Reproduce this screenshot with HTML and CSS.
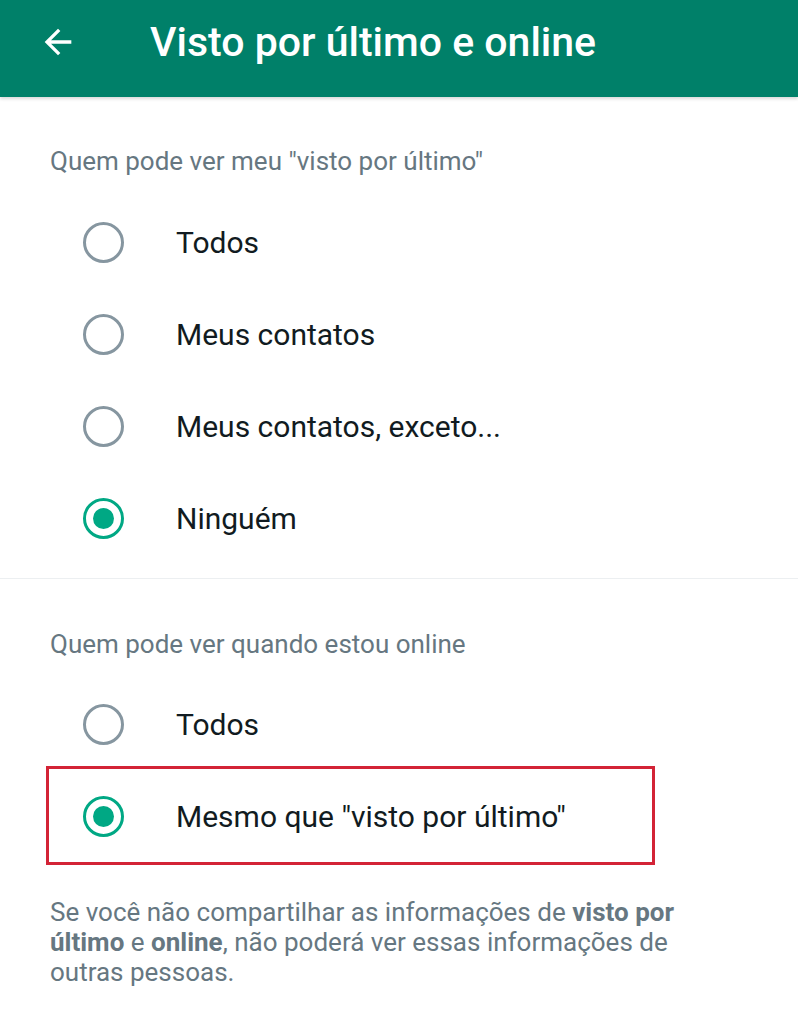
FILE: index.html
```html
<!DOCTYPE html>
<html lang="pt">
<head>
<meta charset="utf-8">
<link rel="stylesheet" href="styles.css">
</head>
<body>
<header class="appbar">
  <svg class="back" viewBox="0 0 24 24" width="40" height="40"><path d="M20 11H7.83l5.59-5.59L12 4l-8 8 8 8 1.41-1.41L7.83 13H20v-2z" fill="#fff"/></svg>
  <h1 class="title">Visto por último e online</h1>
</header>
<main>
  <section class="group first">
    <h2 class="group-title">Quem pode ver meu "visto por último"</h2>
    <div class="option"><span class="radio"></span><span class="label">Todos</span></div>
    <div class="option"><span class="radio"></span><span class="label">Meus contatos</span></div>
    <div class="option"><span class="radio"></span><span class="label">Meus contatos, exceto...</span></div>
    <div class="option"><span class="radio checked"></span><span class="label">Ninguém</span></div>
  </section>
  <section class="group second">
    <h2 class="group-title">Quem pode ver quando estou online</h2>
    <div class="option"><span class="radio"></span><span class="label">Todos</span></div>
    <div class="option highlight"><span class="radio checked"></span><span class="label">Mesmo que "visto por último"</span></div>
  </section>
  <p class="note">Se você não compartilhar as informações de <b>visto</b> <b>por</b> <b>último</b> e <b>online</b>, não poderá ver essas informações de outras pessoas.</p>
</main>
</body>
</html>
```
FILE: styles.css
```css
html, body {
  margin: 0;
  padding: 0;
  background: #fff;
  font-family: Roboto, "Noto Sans", sans-serif;
}
.appbar {
  height: 97px;
  background: #008069;
  display: flex;
  align-items: center;
  box-shadow: 0 2px 3px rgba(0,0,0,0.15);
  position: relative;
}
.back {
  margin-left: 38px;
  margin-top: -14px;
}
.title {
  margin: -14px 0 0 72px;
  color: #fff;
  font-weight: 500;
  font-size: 41px;
  letter-spacing: 0;
}
.group-title {
  margin: 0 0 0 50px;
  font-size: 26px;
  line-height: 32px;
  font-weight: 400;
  color: #667781;
}
.group.first {
  padding-top: 48px;
  padding-bottom: 14px;
  border-bottom: 1px solid #eceff1;
}
.group.first .group-title { margin-bottom: 19px; }
.group.second {
  padding-top: 49px;
}
.group.second .group-title { margin-bottom: 18px; }
.option {
  height: 92px;
  display: flex;
  align-items: center;
  position: relative;
}
.radio {
  box-sizing: border-box;
  width: 41px;
  height: 41px;
  border-radius: 50%;
  border: 3px solid #8696a0;
  margin-left: 83px;
  display: flex;
  align-items: center;
  justify-content: center;
}
.radio.checked {
  border-color: #00a884;
}
.radio.checked::before {
  content: "";
  width: 21px;
  height: 21px;
  border-radius: 50%;
  background: #00a884;
}
.label {
  margin-left: 52px;
  font-size: 30px;
  color: #111b21;
}
.highlight::after {
  content: "";
  position: absolute;
  top: -4px;
  bottom: -3px;
  left: 46px;
  width: 609px;
  box-sizing: border-box;
  border: 3px solid #d32336;
}
.note {
  margin: 35px 50px 0 50px;
  font-size: 26px;
  line-height: 30px;
  color: #667781;
  max-width: 640px;
}
.note b {
  font-weight: 700;
  display: inline-block;
  line-height: 30px;
}
```
